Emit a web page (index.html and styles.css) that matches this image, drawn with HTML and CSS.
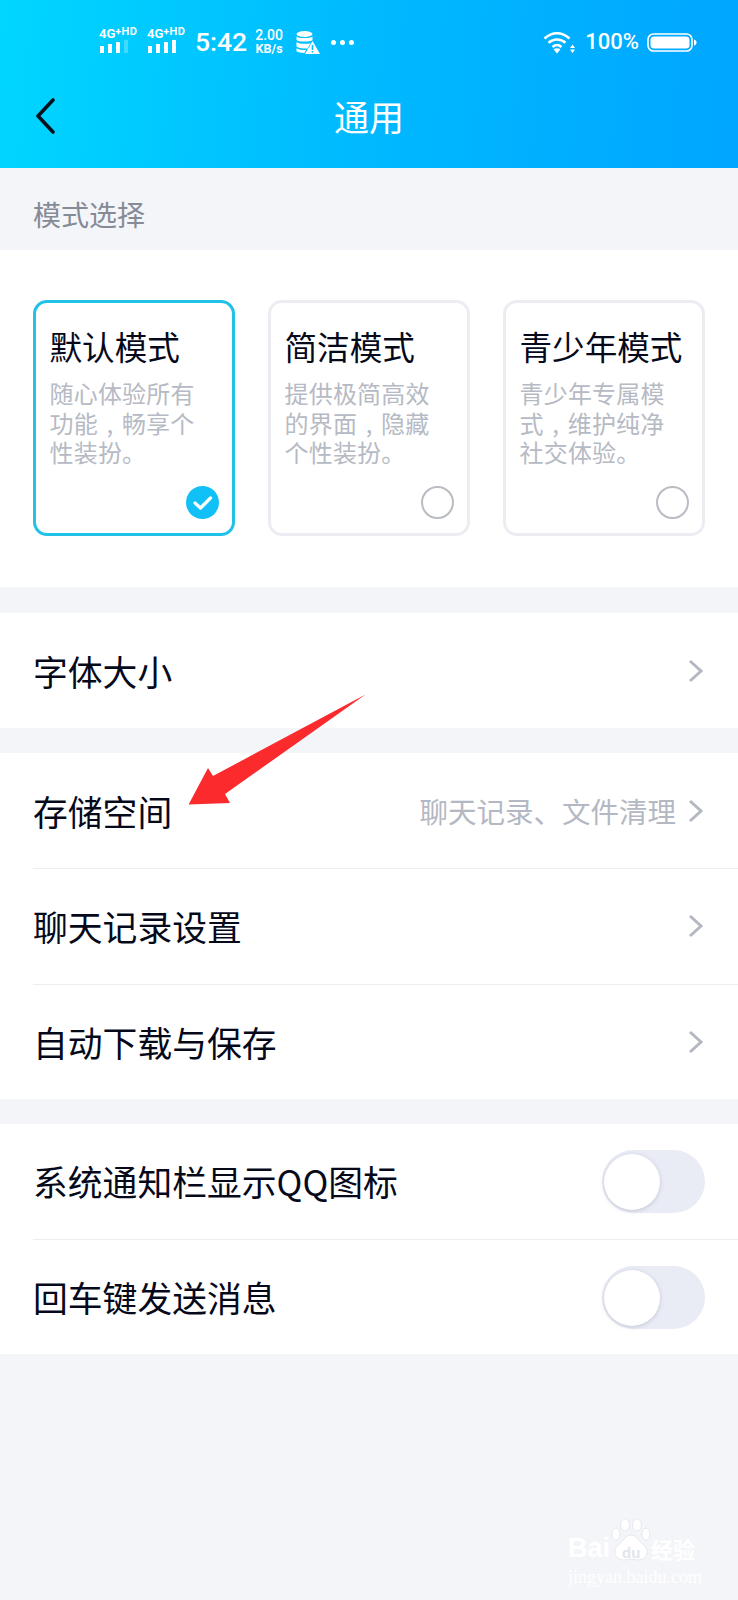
FILE: index.html
```html
<!DOCTYPE html>
<html lang="zh">
<head>
<meta charset="utf-8">
<title>通用</title>
<link rel="stylesheet" href="styles.css">
</head>
<body>
<div class="page">
  <header class="header">
    <div class="status">
      <div class="sig">
        <span class="sig-text">4G<b>+HD</b></span>
        <svg class="sig-bars" width="30" height="13" viewBox="0 0 30 13"><rect x="1" y="6" width="4" height="7" fill="#fff"/><rect x="9" y="4" width="4" height="9" fill="#fff"/><rect x="17" y="2" width="4" height="11" fill="#fff"/><rect x="25" y="0" width="4" height="13" fill="#fff" fill-opacity=".25"/></svg>
      </div>
      <div class="sig">
        <span class="sig-text">4G<b>+HD</b></span>
        <svg class="sig-bars" width="30" height="13" viewBox="0 0 30 13"><rect x="1" y="6" width="4" height="7" fill="#fff"/><rect x="9" y="4" width="4" height="9" fill="#fff"/><rect x="17" y="2" width="4" height="11" fill="#fff"/><rect x="25" y="0" width="4" height="13" fill="#fff"/></svg>
      </div>
      <span class="time">5:42</span>
      <div class="speed"><span>2.00</span><span class="speed-unit">KB/s</span></div>
      <svg class="db" width="24" height="23" viewBox="0 0 24 23">
        <ellipse cx="8.500" cy="3" rx="8" ry="3" fill="#fff"/>
        <path d="M.5 5.500c2 2 14 2 16 0V9c-2 2-14 2-16 0z" fill="#fff"/>
        <path d="M.5 11c2 2 11 2.500 14 1l-3 5.500c-4 .3-9-.3-11-2z" fill="#fff"/>
        <path d="M.5 17.300c2 1.500 6 2 9.500 1.700L8.300 22c-3 0-6-.4-7.800-1.700z" fill="#fff"/>
        <path d="M16.500 10 24 23H9z" fill="#fff"/>
        <path d="M15.700 14h1.600v5h-1.600zM15.700 20h1.600v1.600h-1.600z" fill="#0fb4ff"/>
      </svg>
      <div class="dots"><i></i><i></i><i></i></div>
      <div class="status-right">
        <svg class="wifi" width="33" height="24" viewBox="0 0 33 24">
          <path d="M1.500 8.500C9 1.500 19 1.500 26.500 8.500" fill="none" stroke="#fff" stroke-width="2.600"/>
          <path d="M5.500 12.800c5-4.500 12-4.500 17 0" fill="none" stroke="#fff" stroke-width="2.600"/>
          <path d="M9.500 17c2.800-2.500 6.200-2.500 9 0" fill="none" stroke="#fff" stroke-width="2.400"/>
          <path d="M10.500 19.300c2-1.400 5-1.400 7 0L14 23.500z" fill="#fff"/>
          <path d="M29.500 14.500l2.500 3.500h-5zM27 19.500h5l-2.500 3.500z" fill="#fff"/>
        </svg>
        <span class="battery-pct">100%</span>
        <svg class="battery" width="50" height="19" viewBox="0 0 50 19">
          <rect x="1" y="1" width="44" height="17" rx="5.500" fill="none" stroke="#fff" stroke-width="1.600"/>
          <rect x="3.500" y="3.500" width="39" height="12" rx="3.500" fill="#fff"/>
          <path d="M47 6.500c1.800.5 2.500 1.500 2.500 3s-.7 2.500-2.500 3z" fill="#fff"/>
        </svg>
      </div>
    </div>
    <div class="nav">
      <svg class="back" width="20" height="36" viewBox="0 0 20 36"><path d="M18 2 3 18l15 16" fill="none" stroke="#06101c" stroke-width="3.600" stroke-linecap="round" stroke-linejoin="round"/></svg>
      <h1 class="title">通用</h1>
      <span></span>
    </div>
  </header>

  <div class="section-label">模式选择</div>

  <section class="modes">
    <article class="card card-on">
      <h2 class="card-title">默认模式</h2>
      <p class="card-desc">随心体验所有功能&nbsp;,&nbsp;畅享个性装扮。</p>
      <span class="check"><svg width="33" height="33" viewBox="0 0 33 33"><path d="M9 17l5.500 5L24.500 12" fill="none" stroke="#fff" stroke-width="3.200" stroke-linecap="round" stroke-linejoin="round"/></svg></span>
    </article>
    <article class="card">
      <h2 class="card-title">简洁模式</h2>
      <p class="card-desc">提供极简高效的界面&nbsp;,&nbsp;隐藏个性装扮。</p>
      <span class="radio"></span>
    </article>
    <article class="card">
      <h2 class="card-title">青少年模式</h2>
      <p class="card-desc">青少年专属模式&nbsp;,&nbsp;维护纯净社交体验。</p>
      <span class="radio"></span>
    </article>
  </section>

  <section class="group">
    <div class="row"><span class="row-label">字体大小</span><svg class="chev" width="15" height="24" viewBox="0 0 15 24"><path d="M2 2l11 10L2 22" fill="none" stroke="#b4b8c3" stroke-width="3"/></svg></div>
  </section>

  <section class="group">
    <div class="row"><span class="row-label">存储空间</span><span class="row-note">聊天记录、文件清理</span><svg class="chev" width="15" height="24" viewBox="0 0 15 24"><path d="M2 2l11 10L2 22" fill="none" stroke="#b4b8c3" stroke-width="3"/></svg></div>
    <div class="row"><span class="row-label">聊天记录设置</span><svg class="chev" width="15" height="24" viewBox="0 0 15 24"><path d="M2 2l11 10L2 22" fill="none" stroke="#b4b8c3" stroke-width="3"/></svg></div>
    <div class="row"><span class="row-label">自动下载与保存</span><svg class="chev" width="15" height="24" viewBox="0 0 15 24"><path d="M2 2l11 10L2 22" fill="none" stroke="#b4b8c3" stroke-width="3"/></svg></div>
  </section>

  <section class="group">
    <div class="row"><span class="row-label">系统通知栏显示QQ图标</span><span class="toggle"><i class="knob"></i></span></div>
    <div class="row"><span class="row-label">回车键发送消息</span><span class="toggle"><i class="knob"></i></span></div>
  </section>

  <svg class="arrow" width="180" height="112" viewBox="187 694 180 112"><path d="M365.500 694.500 225 794 230 803 188.600 804.500 208 768 213 776z" fill="#fb2a2d"/></svg>

  <div class="watermark">
    <div class="wm-top">
      <span class="wm-bai">Bai</span>
      <span class="wm-paw">
        <svg width="40" height="44" viewBox="0 0 40 44">
          <ellipse cx="5" cy="15" rx="4" ry="6" fill="#fff" stroke="#e6e8ee"/>
          <ellipse cx="14" cy="6" rx="4.500" ry="6" fill="#fff" stroke="#e6e8ee"/>
          <ellipse cx="26" cy="6" rx="4.500" ry="6" fill="#fff" stroke="#e6e8ee"/>
          <ellipse cx="35" cy="15" rx="4" ry="6" fill="#fff" stroke="#e6e8ee"/>
          <path d="M20 16c6 0 7 6 13 10 6 5 3 15-6 15-3 0-5-1-7-1s-4 1-7 1c-9 0-12-10-6-15 6-4 7-10 13-10z" fill="#fff" stroke="#e6e8ee"/>
        </svg>
        <span class="wm-du">du</span>
      </span>
      <span class="wm-cn">经验</span>
    </div>
    <div class="wm-url">jingyan.baidu.com</div>
  </div>
</div>
</body>
</html>
```
FILE: styles.css
```css
* { box-sizing: border-box; }
html, body { margin: 0; padding: 0; }
body { font-family: "Noto Sans CJK SC", "Noto Sans", sans-serif; background: #f3f5f9; }
.page { position: relative; width: 738px; height: 1600px; overflow: hidden; background: #f3f5f9; }

.header { height: 168px; padding-top: 24px; background: linear-gradient(95deg, #00d6ff 0%, #00b9ff 50%, #00a6ff 100%); color: #fff; }
.status { display: flex; align-items: center; height: 36px; padding: 0 41px 0 99px; }
.sig { display: flex; flex-direction: column; width: 48px; padding-bottom: 4px; font-family: Roboto, sans-serif; }
.sig-text { font-size: 13px; line-height: 10px; font-weight: 700; white-space: nowrap; }
.sig-text b { font-size: 11px; font-weight: 700; letter-spacing: .3px; vertical-align: 3px; }
.sig-bars { display: block; margin-top: 1px; }
.time { font-family: Roboto, sans-serif; font-weight: 500; font-size: 26.500px; line-height: 36px; }
.speed { display: flex; flex-direction: column; margin-left: 8px; font-family: Roboto, sans-serif; font-weight: 500; font-size: 14px; line-height: 13px; text-align: center; }
.speed-unit { font-size: 12.500px; font-weight: 700; }
.db { margin-left: 13px; }
.dots { display: flex; gap: 4px; margin-left: 11px; }
.dots i { width: 5px; height: 5px; border-radius: 50%; background: #fff; }
.status-right { display: flex; align-items: center; margin-left: auto; }
.wifi { display: block; }
.battery-pct { font-family: Roboto, sans-serif; font-weight: 500; font-size: 22px; line-height: 36px; margin-left: 9px; }
.battery { margin-left: 8px; display: block; }

.nav { display: grid; grid-template-columns: 1fr auto 1fr; align-items: center; height: 60px; margin-top: 26px; padding: 0 35px; }
.back { display: block; }
.title { margin: 0; font-size: 35px; font-weight: 400; line-height: 60px; }

.section-label { height: 82px; padding-left: 33px; font-size: 28px; line-height: 92px; color: #858a96; }

.modes { display: grid; grid-template-columns: repeat(3, 202px); column-gap: 33px; height: 337px; padding: 50px 0 0 33px; background: #fff; }
.card { position: relative; height: 236px; padding: 21px 0 0 13.500px; border: 3px solid #ebedf2; border-radius: 14px; background: #fff; }
.card-on { border-color: #22c1e8; }
.card-title { margin: 0; font-size: 32.600px; line-height: 44px; font-weight: 400; color: #05091a; white-space: nowrap; }
.card-desc { width: 147px; margin: 10px 0 0; font-size: 24px; letter-spacing: .2px; word-spacing: 3px; line-height: 29.600px; color: #b6bac4; }
.check, .radio { position: absolute; right: 13px; bottom: 14px; width: 33px; height: 33px; border-radius: 50%; }
.check { background: #12c0f8; }
.check svg { display: block; }
.radio { border: 2px solid #b9bcc3; }

.group { margin-top: 25px; background: #fff; }
.modes + .group { margin-top: 26px; }
.row { display: flex; align-items: center; height: 115.200px; margin-left: 33px; padding-right: 33px; border-top: 1px solid #eceef2; }
.row:first-child { border-top: 0; }
.row-label { flex: 1; font-size: 34.800px; color: #05091a; white-space: nowrap; }
.row-note { font-size: 28.500px; color: #b4b8c3; margin-right: 12px; }
.chev { display: block; margin-right: 2px; }
.toggle { display: block; position: relative; flex: none; width: 103px; height: 63px; border-radius: 32px; background: #e9ecf5; }
.knob { display: block; position: absolute; left: 2px; top: 4px; width: 56px; height: 56px; border-radius: 50%; background: #fff; box-shadow: 0 1px 4px rgba(120,125,150,.35); }

.arrow { position: absolute; left: 187px; top: 694px; display: block; }

.watermark { position: absolute; left: 568px; top: 1519px; width: 134px; color: #fff; }
.wm-top { display: flex; align-items: flex-end; height: 44px; }
.wm-bai { width: 43px; font-family: "Liberation Sans", sans-serif; font-size: 27px; line-height: 30px; font-weight: 700; }
.wm-paw { position: relative; display: block; flex: none; width: 40px; height: 44px; }
.wm-paw svg { display: block; }
.wm-du { position: absolute; left: 11px; top: 26px; font-family: "Liberation Sans", sans-serif; font-size: 15px; line-height: 15px; font-weight: 700; color: #e2e5eb; }
.wm-cn { font-size: 22px; line-height: 30px; font-weight: 700; white-space: nowrap; }
.wm-url { font-family: "Liberation Serif", serif; font-size: 18px; line-height: 20px; white-space: nowrap; margin-top: 4px; }
```
